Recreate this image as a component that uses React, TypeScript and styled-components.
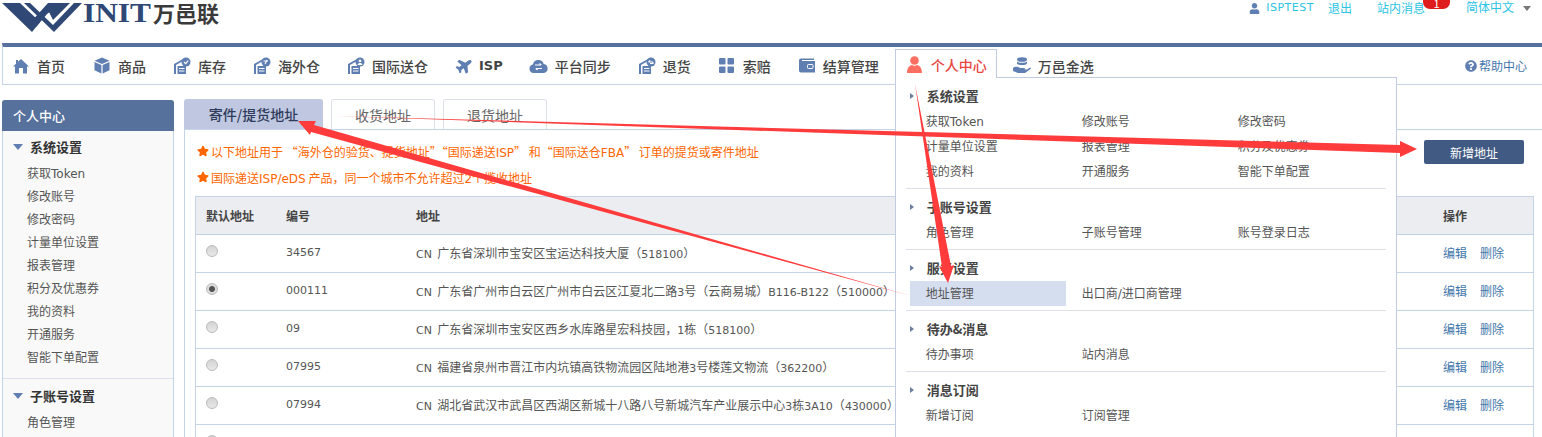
import { createGlobalStyle, styled } from "styled-components";
import { FaPlane, FaQuestionCircle, FaStar, FaUser } from "react-icons/fa";

const GlobalStyle = createGlobalStyle`
    html, body {
        margin: 0;
        height: 100%;
        overflow: hidden;
        background: #fff;
        font-family: "Noto Sans CJK SC", sans-serif;
        font-size: 12px;
        color: #555;
    }
    * { box-sizing: border-box; }
`

const Latin = styled.span`
    font-family: "DejaVu Sans", sans-serif;
    font-size: 11px;
`

const Page = styled.div`
    position: relative;
    width: 1542px;
    height: 437px;
    overflow: hidden;
`

const TopBar = styled.header`
    display: flex;
    justify-content: space-between;
    height: 43px;
`

const Logo = styled.div`
    display: flex;
    align-items: flex-start;
    height: 32px;
`

const LogoLatin = styled.span`
    display: block;
    width: 70px;
    margin-left: -2px;
    font-family: "Liberation Serif", serif;
    font-weight: 700;
    font-size: 28px;
    line-height: 25px;
    color: #2f4875;
    transform: scaleX(1.12);
    transform-origin: left center;
`

const LogoCn = styled.span`
    font-weight: 700;
    font-size: 22px;
    line-height: 25px;
    color: #3a3a3a;
`

const UserLinks = styled.div`
    display: flex;
    align-items: flex-start;
    padding-right: 11px;
    color: #2bc4e4;
    line-height: 16px;
    white-space: nowrap;
`

const UserName = styled.span`
    display: flex;
    align-items: center;
    gap: 6px;
    margin-right: 14px;
    font-family: "DejaVu Sans", sans-serif;
    font-size: 11px;
    letter-spacing: 0.5px;
    svg { color: #5f7fb2; }
`

const MessageLink = styled.span`
    position: relative;
    margin: 0 41px 0 25px;
`

const Badge = styled.span`
    position: absolute;
    top: -3px;
    left: 46px;
    width: 27px;
    height: 12px;
    border-radius: 0 0 7px 7px;
    background: #e01b1b;
    color: #fff;
    text-align: center;
    line-height: 12px;
    font-size: 11px;
`

const LangLink = styled.span`
    margin-top: -1px;
`

const LangCaret = styled.span`
    margin: 6px 0 0 9px;
    border: 4px solid transparent;
    border-top: 5px solid #777;
    border-bottom: 0;
`

const NavBar = styled.nav`
    display: flex;
    align-items: center;
    gap: 28px;
    height: 42px;
    margin-left: 2px;
    padding-left: 10px;
    border-top: 4px solid #56719c;
    border-bottom: 1px solid #c5d3e6;
    border-left: 1px solid #c5d3e6;
`

const NavItem = styled.a<{ $active?: boolean }>`
    display: flex;
    align-items: center;
    gap: 8px;
    font-size: 14px;
    font-weight: 500;
    line-height: 20px;
    color: ${props => props.$active ? "#e8473f" : "#444"};
    white-space: nowrap;

    &:first-child { margin-right: 1px; }
`

const NavIcon = styled.span`
    display: flex;
    justify-content: center;
    align-items: center;
    width: 16px;
    height: 18px;

    svg { flex: none; }
`

const NavLatin = styled.span`
    font-family: "DejaVu Sans", sans-serif;
    font-weight: 700;
    font-size: 13px;
    margin-left: -1px;
`

const PlaneIcon = styled(FaPlane)`
    transform: rotate(-35deg);
`

const ActiveTab = styled(NavItem)`
    position: relative;
    align-self: flex-start;
    align-items: flex-start;
    height: 29px;
    margin: 2px -11px 0 -12px;
    padding: 5px 9px 0 11px;
    background: #fff;
    border: 1px solid #c0cbe0;
    border-bottom: 0;
    z-index: 3;

    &::after {
        content: "";
        position: absolute;
        left: 0;
        right: 0;
        bottom: 0;
        height: 2px;
        background: #fff;
        z-index: 5;
    }
`

const HelpLink = styled.a`
    display: flex;
    align-items: center;
    gap: 2px;
    margin-left: auto;
    margin-right: 15px;
    color: #3f77ab;
    font-size: 12px;
    svg { color: #5f7fb2; }
`

const Dropdown = styled.div`
    position: absolute;
    left: -1px;
    top: 27px;
    width: 502px;
    height: 400px;
    padding: 0 10px;
    background: #fff;
    border: 1px solid #c0cbe0;
    z-index: 4;
    font-size: 12px;
    font-weight: 400;
    color: #555;
`

const MenuGroup = styled.div`
    padding: 6px 0 4px;
    border-bottom: 1px solid #dfe0ee;

    &:last-child { border-bottom: 0; }
`

const MenuTitle = styled.div`
    display: flex;
    align-items: center;
    height: 25px;
    padding: 0 0 2px 4px;
    font-size: 13px;
    font-weight: 700;
    color: #444;

    &::before {
        content: "";
        margin-right: 13px;
        border: 3.5px solid transparent;
        border-left: 4px solid #6f7f9f;
        border-right: 0;
    }
`

const MenuGrid = styled.div`
    display: grid;
    grid-template-columns: repeat(3, 156px);
    margin-left: 4px;
`

const MenuLink = styled.a<{ $active?: boolean }>`
    height: 25px;
    line-height: 23px;
    padding-left: 16px;
    background: ${props => props.$active ? "#d5deef" : "transparent"};

    ${Latin} { font-size: 12px; }
`

const Body = styled.div`
    display: flex;
    align-items: flex-start;
    gap: 10px;
    padding: 14px 0 0 2px;
`

const Sidebar = styled.aside`
    flex: none;
    width: 172px;
    margin-top: 1px;
    background: #f9f9f9;
    border: 1px solid #c5d3e6;
    border-top: 0;
    border-radius: 3px 3px 0 0;
`

const SidebarHead = styled.div`
    height: 31px;
    margin: 0 -1px;
    padding-left: 11px;
    line-height: 31px;
    background: #56719c;
    color: #fff;
    font-size: 13px;
    font-weight: 500;
    border-radius: 3px 3px 0 0;
`

const SideGroup = styled.div`
    padding: 4px 0 10px;
    border-bottom: 1px solid #dfe0ee;

    &:last-child {
        padding-top: 5px;
        border-bottom: 0;
    }
`

const SideTitle = styled.div`
    display: flex;
    align-items: center;
    height: 25px;
    margin-bottom: 1px;
    padding: 0 0 2px 10px;
    font-size: 13px;
    font-weight: 700;
    color: #333;

    &::before {
        content: "";
        margin-right: 7px;
        border: 5px solid transparent;
        border-top: 6px solid #5f7fb2;
        border-bottom: 0;
    }
`

const SideLink = styled.a`
    display: block;
    height: 23px;
    line-height: 23px;
    padding-left: 24px;
    color: #555;

    ${Latin} { font-size: 12px; }
`

const Main = styled.main`
    flex: 1;
    min-width: 0;
`

const Tabs = styled.div`
    display: flex;
    gap: 8px;
    height: 31px;
    border-bottom: 1px solid #c5d3e6;
`

const Tab = styled.a<{ $active?: boolean; $width: number }>`
    width: ${props => props.$width}px;
    height: 30px;
    line-height: 30px;
    text-align: center;
    font-size: 14px;
    border-radius: 3px 3px 0 0;
    color: ${props => props.$active ? "#2f3b5c" : "#666"};
    font-weight: ${props => props.$active ? 500 : 400};
    background: ${props => props.$active ? "#bfc8e0" : "#fff"};
    border: ${props => props.$active ? "none" : "1px solid #dde1ea"};
    border-bottom: none;
`

const Content = styled.section`
    padding: 9px 8px 0 10px;
    border-left: 1px solid #c5d3e6;
`

const NoticeRow = styled.div`
    display: flex;
    justify-content: space-between;
    margin-bottom: 5px;
    padding-left: 2px;
`

const Notices = styled.div`
    margin: -1px 0 1px;
    color: #ff6600;
`

const Notice = styled.p`
    display: flex;
    align-items: center;
    gap: 2px;
    margin: 0;
    height: 26px;
    white-space: pre;

    ${Latin} { font-size: 12px; }
`

const AddButton = styled.button`
    width: 100px;
    height: 24px;
    margin: 1px 10px 0 0;
    border: 0;
    border-radius: 2px;
    background: #415a84;
    color: #fff;
    font: inherit;
`

const AddressTable = styled.div`
    border: 1px solid #c5d3e6;
    border-bottom: 0;
`

const TableRow = styled.div<{ $head?: boolean }>`
    display: grid;
    grid-template-columns: 80px 130px 1027px 1fr;
    align-items: center;
    height: 38px;
    padding: 0 0 ${props => props.$head ? 0 : 2}px 10px;
    border-bottom: 1px solid #c5d3e6;
    background: ${props => props.$head ? "#ecedf1" : "#fff"};
    font-weight: ${props => props.$head ? 700 : 400};
    color: ${props => props.$head ? "#444" : "#555"};
    white-space: pre;
`

const Radio = styled.span<{ $checked?: boolean }>`
    display: block;
    width: 12px;
    height: 12px;
    margin-top: -3px;
    border-radius: 50%;
    border: 1px solid #bbb;
    background: ${props => props.$checked
        ? "radial-gradient(circle, #555 0 2.5px, #ddd 3.5px)"
        : "linear-gradient(#d4d4d4, #e8e8e8)"};
`

const Actions = styled.span`
    display: flex;
    gap: 13px;
    color: #3f77ab;
`

const ArrowLayer = styled.svg`
    position: absolute;
    left: 0;
    top: 0;
    z-index: 10;
    pointer-events: none;
`

const BLUE = "#5f7fb2"

// runs of latin letters and digits get the wider font, as in the reference
function Mixed({ text }: { text: string }) {
    const parts = text.split(/([A-Za-z0-9/-]+)/)
    return (
        <>
            {parts.map((part, i) => i % 2 === 1 ? <Latin key={i}>{part}</Latin> : part)}
        </>
    )
}

function WarehouseIcon({ badge }: { badge: "check" | "globe" | "user" | "back" }) {
    return (
        <svg width="18" height="18" viewBox="0 0 18 18">
            <path d="M1 7 L10 2 V4 L3 8 V17 H1 Z" fill={BLUE} />
            <path d="M4.5 9 H13 V17 H4.5 Z M6 11 V12 H11.5 V11 Z M6 13.5 V14.5 H11.5 V13.5 Z" fill={BLUE} fillRule="evenodd" />
            <circle cx="13" cy="5" r="4.5" fill={BLUE} />
            {badge === "check" && <path d="M11 5 L12.7 6.7 L15.2 3.6" stroke="#fff" strokeWidth="1.2" fill="none" />}
            {badge === "globe" && <path d="M10.5 4 H15 M12 7 L14 3" stroke="#fff" strokeWidth="1.1" fill="none" />}
            {badge === "user" && <path d="M13 2.5 a1.4 1.4 0 1 1 -0.01 0 Z M10.5 8 c0.4 -2.6 4.6 -2.6 5 0 Z" fill="#fff" />}
            {badge === "back" && <path d="M10.5 5 H15 M15 5 V6.5 H12 M10.5 5 L12.2 3.4" stroke="#fff" strokeWidth="1.1" fill="none" />}
        </svg>
    )
}

function HomeIcon() {
    return (
        <svg width="16" height="16" viewBox="0 0 16 16">
            <path d="M8 1 L16 8.5 H14 V15.5 H10 V10 H6 V15.5 H2 V8.5 H0 L3 5.7 V2 H5 V3.8 Z" fill={BLUE} />
        </svg>
    )
}

function BoxIcon() {
    return (
        <svg width="16" height="17" viewBox="0 0 16 17">
            <path d="M8 0.5 L15.5 3.7 L8 7 L0.5 3.7 Z" fill={BLUE} />
            <path d="M0.5 5 L7.4 8 V16.5 L0.5 13.3 Z M15.5 5 L8.6 8 V16.5 L15.5 13.3 Z" fill={BLUE} />
        </svg>
    )
}

function CloudIcon() {
    return (
        <svg width="19" height="15" viewBox="0 0 19 15">
            <path d="M4.5 15 a4.3 4.3 0 0 1 -0.6 -8.5 a5.6 5.6 0 0 1 10.8 -0.6 a4.6 4.6 0 0 1 0 9.1 Z" fill={BLUE} />
            <path d="M6 7 H12 M10.5 5.5 L12.3 7 M13 10.5 H7 M8.5 12 L6.7 10.5" stroke="#fff" strokeWidth="1.1" fill="none" />
        </svg>
    )
}

function GridIcon() {
    return (
        <svg width="15" height="15" viewBox="0 0 15 15" fill={BLUE}>
            <rect x="0" y="0" width="6.5" height="6.5" rx="1" />
            <rect x="8.5" y="0" width="6.5" height="6.5" rx="1" />
            <rect x="0" y="8.5" width="6.5" height="6.5" rx="1" />
            <rect x="8.5" y="8.5" width="6.5" height="6.5" rx="1" />
        </svg>
    )
}

function WalletIcon() {
    return (
        <svg width="16" height="15" viewBox="0 0 16 15">
            <path d="M2 0.5 H15 V2 H3 V3 H16 V14.5 H2 a2 2 0 0 1 -2 -2 V2.5 a2 2 0 0 1 2 -2 Z" fill={BLUE} />
            <rect x="8.5" y="6.5" width="5.5" height="4" rx="1" fill="none" stroke="#fff" />
        </svg>
    )
}

function PersonIcon() {
    return (
        <svg width="15" height="17" viewBox="0 0 15 17">
            <circle cx="7.5" cy="4.5" r="4.3" fill="#ff6f61" />
            <path d="M0 17 C0 11 3 9.5 5 9 L7.5 10 L10 9 C12 9.5 15 11 15 17 Z" fill="#ff6f61" />
        </svg>
    )
}

function CoinHandIcon() {
    return (
        <svg width="18" height="17" viewBox="0 0 18 17" fill={BLUE}>
            <ellipse cx="9" cy="2.5" rx="5" ry="2.3" />
            <path d="M4 4.5 c1 1.8 9 1.8 10 0 V6.5 c-1 2 -9 2 -10 0 Z" />
            <path d="M0 11 c3 -2 5 -1 7 0 h4 c1.5 0 1.5 1.5 0 1.5 h-3 h6 l3 -2 c1 0 1 1 0.5 1.5 L12 16 H5 L0 14 Z" />
        </svg>
    )
}

function LogoMark() {
    return (
        <svg width="85" height="33" viewBox="0 0 85 33" fill="#2f4875">
            <path d="M2 3 H20 L40 22 L32 32 Z" />
            <path d="M24 3 H30 L53 25 L74 3 H82 L54 32 Z" />
            <path d="M30 23 L48 3 H62 L47 14 L37 26 L33 29 Z" />
            <path d="M49 12 L60 3 H70 L53 20 Z" />
        </svg>
    )
}

const navItems = [
    { label: "首页", icon: <HomeIcon /> },
    { label: "商品", icon: <BoxIcon /> },
    { label: "库存", icon: <WarehouseIcon badge="check" /> },
    { label: "海外仓", icon: <WarehouseIcon badge="globe" /> },
    { label: "国际送仓", icon: <WarehouseIcon badge="user" /> },
    { label: "ISP", icon: <PlaneIcon size={17} color={BLUE} /> },
    { label: "平台同步", icon: <CloudIcon /> },
    { label: "退货", icon: <WarehouseIcon badge="back" /> },
    { label: "索赔", icon: <GridIcon /> },
    { label: "结算管理", icon: <WalletIcon /> },
]

const menuGroups = [
    { title: "系统设置", links: ["获取Token", "修改账号", "修改密码", "计量单位设置", "报表管理", "积分及优惠券", "我的资料", "开通服务", "智能下单配置"] },
    { title: "子账号设置", links: ["角色管理", "子账号管理", "账号登录日志"] },
    { title: "服务设置", links: ["地址管理", "出口商/进口商管理"] },
    { title: "待办&消息", links: ["待办事项", "站内消息"] },
    { title: "消息订阅", links: ["新增订阅", "订阅管理"] },
]

const addresses = [
    { code: "34567", text: "CN  广东省深圳市宝安区宝运达科技大厦（518100）" },
    { code: "000111", text: "CN  广东省广州市白云区广州市白云区江夏北二路3号（云商易城）B116-B122（510000）", checked: true },
    { code: "09", text: "CN  广东省深圳市宝安区西乡水库路星宏科技园，1栋（518100）" },
    { code: "07995", text: "CN  福建省泉州市晋江市内坑镇高铁物流园区陆地港3号楼莲文物流（362200）" },
    { code: "07994", text: "CN  湖北省武汉市武昌区西湖区新城十八路八号新城汽车产业展示中心3栋3A10（430000）" },
]

export default function App() {
    return (
        <Page>
            <GlobalStyle />
            <TopBar>
                <Logo>
                    <LogoMark />
                    <LogoLatin>INIT</LogoLatin>
                    <LogoCn>万邑联</LogoCn>
                </Logo>
                <UserLinks>
                    <UserName><FaUser size={11} />ISPTEST</UserName>
                    <span>退出</span>
                    <MessageLink>站内消息<Badge>1</Badge></MessageLink>
                    <LangLink>简体中文</LangLink>
                    <LangCaret />
                </UserLinks>
            </TopBar>

            <NavBar>
                {navItems.map(item => (
                    <NavItem key={item.label}>
                        <NavIcon>{item.icon}</NavIcon>
                        {item.label === "ISP" ? <NavLatin>ISP</NavLatin> : item.label}
                    </NavItem>
                ))}
                <ActiveTab $active>
                    <NavIcon><PersonIcon /></NavIcon>个人中心
                    <Dropdown>
                        {menuGroups.map(group => (
                            <MenuGroup key={group.title}>
                                <MenuTitle>{group.title}</MenuTitle>
                                <MenuGrid>
                                    {group.links.map(link => (
                                        <MenuLink key={link} $active={link === "地址管理"}><Mixed text={link} /></MenuLink>
                                    ))}
                                </MenuGrid>
                            </MenuGroup>
                        ))}
                    </Dropdown>
                </ActiveTab>
                <NavItem><NavIcon><CoinHandIcon /></NavIcon>万邑金选</NavItem>
                <HelpLink><FaQuestionCircle size={12} />帮助中心</HelpLink>
            </NavBar>

            <Body>
                <Sidebar>
                    <SidebarHead>个人中心</SidebarHead>
                    <SideGroup>
                        <SideTitle>{menuGroups[0].title}</SideTitle>
                        {menuGroups[0].links.map(link => <SideLink key={link}><Mixed text={link} /></SideLink>)}
                    </SideGroup>
                    <SideGroup>
                        <SideTitle>{menuGroups[1].title}</SideTitle>
                        <SideLink>{menuGroups[1].links[0]}</SideLink>
                    </SideGroup>
                </Sidebar>

                <Main>
                    <Tabs>
                        <Tab $active $width={139}>寄件/提货地址</Tab>
                        <Tab $width={104}>收货地址</Tab>
                        <Tab $width={104}>退货地址</Tab>
                    </Tabs>
                    <Content>
                        <NoticeRow>
                            <Notices>
                                <Notice><FaStar size={12} /><span><Mixed text="以下地址用于 “海外仓的验货、提货地址”“国际递送ISP” 和“国际送仓FBA” 订单的提货或寄件地址" /></span></Notice>
                                <Notice><FaStar size={12} /><span><Mixed text="国际递送ISP/eDS 产品，同一个城市不允许超过2个揽收地址" /></span></Notice>
                            </Notices>
                            <AddButton>新增地址</AddButton>
                        </NoticeRow>
                        <AddressTable>
                            <TableRow $head>
                                <span>默认地址</span>
                                <span>编号</span>
                                <span>地址</span>
                                <span>操作</span>
                            </TableRow>
                            {addresses.map(row => (
                                <TableRow key={row.code}>
                                    <Radio $checked={row.checked} />
                                    <Latin>{row.code}</Latin>
                                    <span><Mixed text={row.text} /></span>
                                    <Actions><span>编辑</span><span>删除</span></Actions>
                                </TableRow>
                            ))}
                            <TableRow><Radio /></TableRow>
                        </AddressTable>
                    </Content>
                </Main>
            </Body>

            <ArrowLayer width="1542" height="437" viewBox="0 0 1542 437" fill="#ff3b3b">
                <polygon points="335,116 1400,145 1400,141 1417,149 1400,157 1400,153" />
                <polygon points="298,121 316,121 314,125 911,296 311,132 310,135" />
                <polygon points="915,84 951,266 954,265 948,283 939,266 942,267" />
            </ArrowLayer>
        </Page>
    )
}
